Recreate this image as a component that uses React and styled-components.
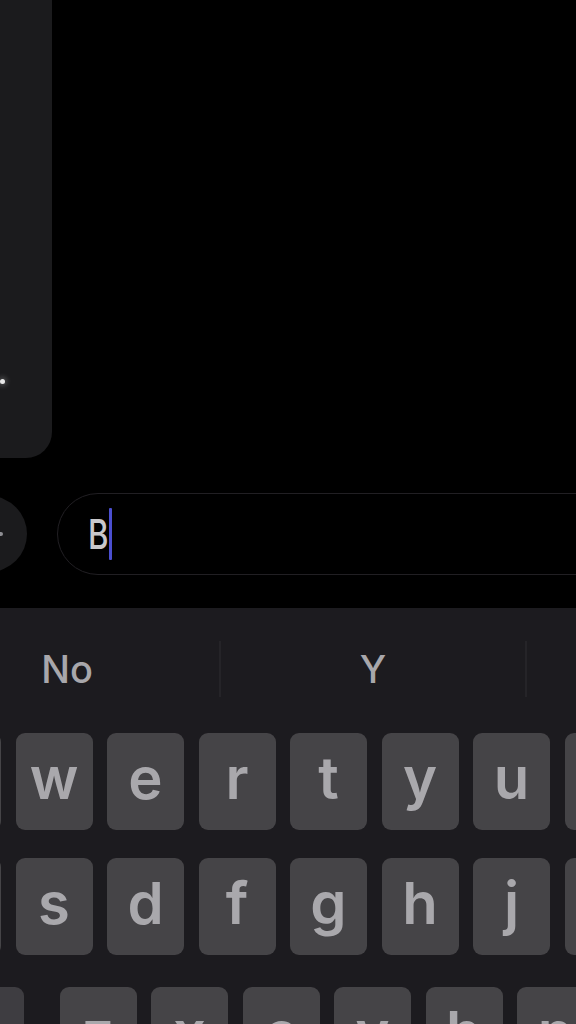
import React from 'react'
import styled, { createGlobalStyle } from 'styled-components'

const GlobalStyle = createGlobalStyle`
  html, body {
    margin: 0;
    padding: 0;
    background: #000;
  }
  body {
    width: 576px;
    height: 1024px;
    overflow: hidden;
    font-family: Inter, "Liberation Sans", Arial, sans-serif;
  }
`

const rows = [
  ['q', 'w', 'e', 'r', 't', 'y', 'u', 'i'],
  ['a', 's', 'd', 'f', 'g', 'h', 'j', 'k'],
  ['z', 'x', 'c', 'v', 'b', 'n']
]

export default function App() {
  return (
    <>
      <GlobalStyle />
      <Screen>
        <Chat>
          <Bubble>
            <Dot />
          </Bubble>
          <InputRow>
            <RoundButton>
              <Plus />
            </RoundButton>
            <Pill>
              <Typed>B</Typed>
              <Caret />
            </Pill>
          </InputRow>
        </Chat>
        <Keyboard>
          <Suggestions>
            <Suggestion>No</Suggestion>
            <Divider />
            <Suggestion>Y</Suggestion>
            <Divider />
            <Suggestion />
          </Suggestions>
          <KeyRow>
            {rows[0].map(k => <Key key={k}>{k}</Key>)}
          </KeyRow>
          <KeyRow $top={28}>
            {rows[1].map(k => <Key key={k}>{k}</Key>)}
          </KeyRow>
          <KeyRow $top={32}>
            <ShiftKey />
            {rows[2].map(k => <Key key={k}>{k}</Key>)}
          </KeyRow>
        </Keyboard>
      </Screen>
    </>
  )
}

const Screen = styled.div`
  width: 576px;
  height: 1024px;
  display: flex;
  flex-direction: column;
  overflow: hidden;
  background: #000;
`
const Chat = styled.div`
  height: 608px;
  flex-shrink: 0;
  display: flex;
  flex-direction: column;
`
const Bubble = styled.div`
  width: 200px;
  height: 458px;
  margin-left: -148px;
  background: #1b1b1d;
  border-radius: 0 0 26px 26px;
  display: flex;
  justify-content: flex-end;
  align-items: flex-end;
  padding: 0 47px 74px 0;
  box-sizing: border-box;
`
const Dot = styled.div`
  width: 5px;
  height: 5px;
  border-radius: 50%;
  background: #e8e8e8;
  box-shadow: 0 0 5px 2px rgba(255, 255, 255, 0.22);
`
const InputRow = styled.div`
  margin-top: 35px;
  height: 82px;
  display: flex;
  align-items: center;
`
const RoundButton = styled.div`
  width: 76px;
  height: 76px;
  flex-shrink: 0;
  margin-left: -49px;
  border-radius: 50%;
  background: #1b1b1d;
  display: flex;
  align-items: center;
  justify-content: center;
`
const Plus = styled.div`
  width: 28px;
  height: 28px;
  position: relative;
  &::before, &::after {
    content: '';
    position: absolute;
    background: #8e8e93;
    border-radius: 2px;
  }
  &::before {
    left: 0;
    right: 0;
    top: 12px;
    height: 4px;
  }
  &::after {
    top: 0;
    bottom: 0;
    left: 12px;
    width: 4px;
  }
`
const Pill = styled.div`
  height: 82px;
  box-sizing: border-box;
  margin-left: 30px;
  margin-right: -80px;
  flex: 1;
  border: 1.5px solid #211f23;
  border-radius: 41px;
  display: flex;
  align-items: center;
  padding-left: 30px;
`
const Typed = styled.span`
  font-size: 41px;
  font-weight: 500;
  color: #c9c8cb;
  display: inline-block;
  transform: scaleX(0.76);
  transform-origin: left center;
  margin-right: -6px;
`
const Caret = styled.div`
  width: 3px;
  height: 52px;
  background: #4b4fd0;
  border-radius: 1px;
`
const Keyboard = styled.div`
  flex: 1;
  background: #1c1b1f;
  display: flex;
  flex-direction: column;
  overflow: hidden;
`
const Suggestions = styled.div`
  height: 122px;
  flex-shrink: 0;
  display: flex;
  align-items: center;
  margin-left: -85px;
`
const Suggestion = styled.div`
  width: 304px;
  flex-shrink: 0;
  text-align: center;
  font-size: 38px;
  font-weight: 500;
  color: #a8a7ab;
`
const Divider = styled.div`
  width: 2px;
  height: 56px;
  flex-shrink: 0;
  background: #252428;
`
const KeyRow = styled.div`
  display: flex;
  gap: 14.5px;
  margin-top: ${p => (p.$top || 3)}px;
  margin-left: -76px;
`
const Key = styled.div`
  width: 77px;
  height: 97px;
  flex-shrink: 0;
  box-sizing: border-box;
  padding-bottom: 8px;
  border-radius: 9px;
  background: #454447;
  color: #a9a8ac;
  font-size: 58px;
  font-weight: 600;
  display: flex;
  align-items: center;
  justify-content: center;
`
const ShiftKey = styled.div`
  width: 100px;
  height: 97px;
  flex-shrink: 0;
  margin-right: 21px;
  border-radius: 9px;
  background: #3e3d41;
`
